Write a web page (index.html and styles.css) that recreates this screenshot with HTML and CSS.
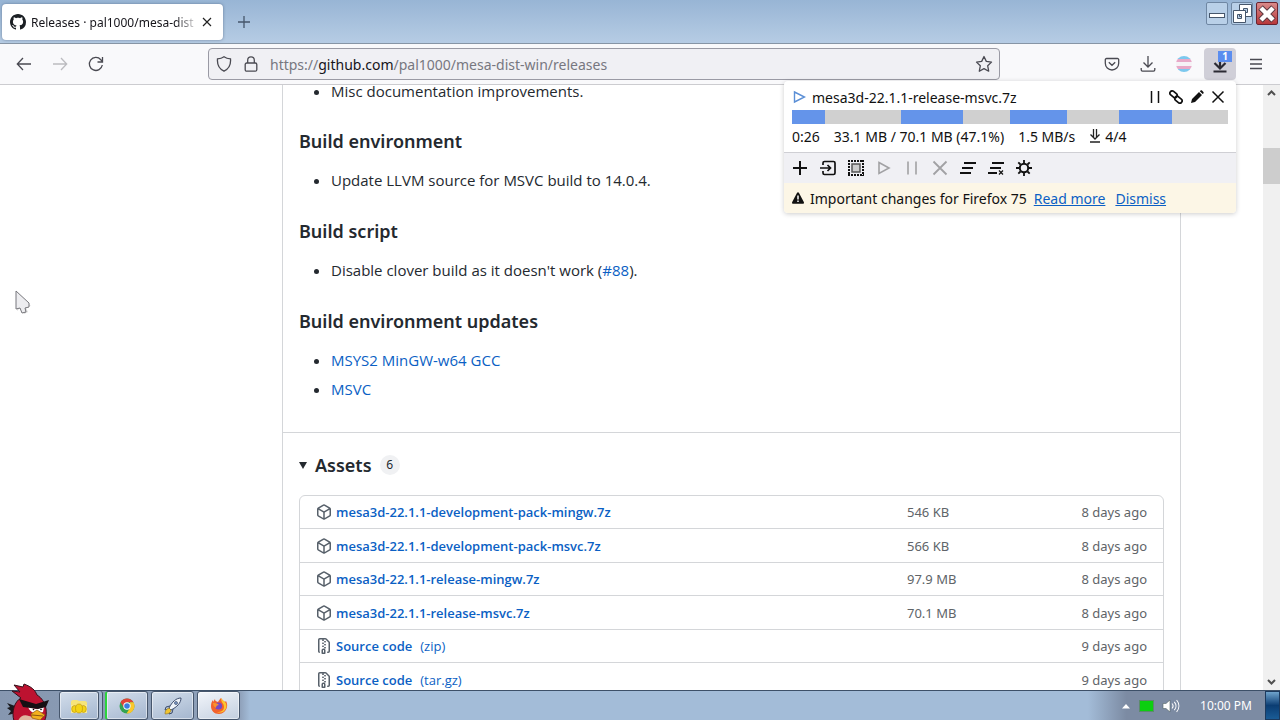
FILE: index.html
```html
<!DOCTYPE html>
<html lang="en">
  <head>
    <meta charset="UTF-8" />
    <meta name="viewport" content="width=device-width, initial-scale=1.0" />
    <title>Releases · pal1000/mesa-dist-win</title>
    <link rel="stylesheet" href="styles.css">
  </head>
  <body>
    <!-- Shared icons -->
    <svg class="icon-defs" aria-hidden="true">
      <symbol id="package" viewBox="0 0 16 16">
        <path fill-rule="evenodd" d="M8.878.392a1.75 1.75 0 00-1.756 0l-5.25 3.045A1.75 1.75 0 001 4.951v6.098c0 .624.332 1.2.872 1.514l5.25 3.045a1.75 1.75 0 001.756 0l5.25-3.045c.54-.313.872-.89.872-1.514V4.951c0-.624-.332-1.2-.872-1.514L8.878.392zM7.875 1.69a.25.25 0 01.25 0l4.63 2.685L8 7.133 3.245 4.375l4.63-2.685zM2.5 5.677v5.372c0 .09.047.171.125.216l4.625 2.683V8.432L2.5 5.677zm6.25 8.271l4.625-2.683a.25.25 0 00.125-.216V5.677L8.75 8.432v5.516z"/>
      </symbol>
      <symbol id="zip" viewBox="0 0 16 16">
        <path fill-rule="evenodd" d="M3.5 1.75a.25.25 0 01.25-.25h3a.75.75 0 000 1.5h.5a.75.75 0 000-1.5h2.086a.25.25 0 01.177.073l2.914 2.914a.25.25 0 01.073.177v8.586a.25.25 0 01-.25.25h-.5a.75.75 0 000 1.5h.5A1.75 1.75 0 0014 13.25V4.664c0-.464-.184-.909-.513-1.237L10.573.513A1.75 1.75 0 009.336 0H3.75A1.75 1.75 0 002 1.75v11.5c0 .649.353 1.214.874 1.515a.75.75 0 10.752-1.298.25.25 0 01-.126-.217V1.75zM8.75 3a.75.75 0 000 1.5h.5a.75.75 0 000-1.5h-.5zM6 5.25a.75.75 0 01.75-.75h.5a.75.75 0 010 1.5h-.5A.75.75 0 016 5.25zm2 1.5A.75.75 0 018.75 6h.5a.75.75 0 010 1.5h-.5A.75.75 0 018 6.75zm-1.25.75a.75.75 0 000 1.5h.5a.75.75 0 000-1.5h-.5zM8 9.75A.75.75 0 018.75 9h.5a.75.75 0 010 1.5h-.5A.75.75 0 018 9.75zm-.75.75a1.75 1.75 0 00-1.75 1.75v3c0 .414.336.75.75.75h2.5a.75.75 0 00.75-.75v-3a1.75 1.75 0 00-1.75-1.75h-.5zM7 12.25a.25.25 0 01.25-.25h.5a.25.25 0 01.25.25v2.25H7v-2.25z"/>
      </symbol>
    </svg>

    <!-- Tabs -->
    <header class="tab-bar">
      <div class="tab">
        <svg class="tab-icon" width="16" height="16" viewBox="0 0 16 16"><path fill="#1b1f24" d="M8 0C3.58 0 0 3.58 0 8c0 3.54 2.29 6.53 5.47 7.59.4.07.55-.17.55-.38 0-.19-.01-.82-.01-1.49-2.01.37-2.53-.49-2.69-.94-.09-.23-.48-.94-.82-1.13-.28-.15-.68-.52-.01-.53.63-.01 1.08.58 1.23.82.72 1.21 1.87.87 2.33.66.07-.52.28-.87.51-1.07-1.78-.2-3.64-.89-3.64-3.95 0-.87.31-1.59.82-2.15-.08-.2-.36-1.02.08-2.12 0 0 .67-.21 2.2.82.64-.18 1.32-.27 2-.27s1.36.09 2 .27c1.53-1.04 2.2-.82 2.2-.82.44 1.1.16 1.92.08 2.12.51.56.82 1.27.82 2.15 0 3.07-1.87 3.75-3.65 3.95.29.25.54.73.54 1.48 0 1.07-.01 1.93-.01 2.2 0 .21.15.46.55.38A8.01 8.01 0 0016 8c0-4.42-3.58-8-8-8z"/></svg>
        <span class="tab-title">Releases · pal1000/mesa-dist</span>
        <button class="tab-close" aria-label="Close tab"><svg width="10" height="10" viewBox="0 0 10 10"><path d="M1 1l8 8M9 1L1 9" stroke="#222" stroke-width="1.2"/></svg></button>
      </div>
      <button class="new-tab" aria-label="New tab"><svg width="12" height="12" viewBox="0 0 12 12"><path d="M6 0v12M0 6h12" stroke="#46566b" stroke-width="1.3"/></svg></button>
      <div class="window-controls">
        <button class="win-btn" aria-label="Minimize"><svg width="22" height="22" viewBox="0 0 22 22"><rect x="3.5" y="10.500" width="15" height="4" fill="#fff" stroke="#46566b"/></svg></button>
        <button class="win-btn" aria-label="Restore"><svg width="22" height="22" viewBox="0 0 22 22"><path fill="#fff" stroke="#46566b" fill-rule="evenodd" d="M8.500 1.500h12v12h-12zM12.500 5.500h4v4h-4z"/><path fill="#fff" stroke="#46566b" fill-rule="evenodd" d="M2.500 7.500h12v12h-12zM6.500 11.500h4v4h-4z"/></svg></button>
        <button class="win-btn win-close" aria-label="Close"><svg width="22" height="22" viewBox="0 0 22 22"><path d="M4.500 4.500l13 13M17.500 4.500l-13 13" stroke="#5b3a42" stroke-width="6.500"/><path d="M5 5l12 12M17 5L5 17" stroke="#fff" stroke-width="4.500"/></svg></button>
      </div>
    </header>

    <!-- Navigation -->
    <nav class="toolbar">
      <button class="tool" aria-label="Back"><svg width="16" height="16" viewBox="0 0 16 16"><path d="M15 8H1.500M7 2L1.300 8 7 14"/></svg></button>
      <button class="tool disabled" aria-label="Forward" disabled><svg width="16" height="16" viewBox="0 0 16 16"><path d="M1 8h13.500M9 2l5.700 6L9 14"/></svg></button>
      <button class="tool" aria-label="Reload"><svg width="16" height="16" viewBox="0 0 16 16"><path d="M14.300 9A6.500 6.500 0 1 1 12.800 3.700L14.500 5.500M14.500 1v5h-5"/></svg></button>

      <div class="url-bar">
        <svg class="line-icon" width="16" height="16" viewBox="0 0 16 16"><path d="M8 .8C6 2.300 3.800 2.800 1.500 2.900c-.5 5.700 1.500 10 6.500 12.300 5-2.300 7-6.600 6.500-12.300C12.200 2.800 10 2.300 8 .8z"/></svg>
        <svg class="line-icon" width="16" height="16" viewBox="0 0 16 16"><rect x="2.200" y="7" width="11.600" height="8.200" rx="1.500"/><path d="M4.700 7V4.200a3.300 3.300 0 0 1 6.600 0V7"/></svg>
        <a class="url" href="#">https://<b>github.com</b>/pal1000/mesa-dist-win/releases</a>
        <button class="star" aria-label="Bookmark this page"><svg class="line-icon" width="18" height="18" viewBox="0 0 18 18"><path stroke-linejoin="round" d="M9 1.500l2.300 4.900 5.200.7-3.800 3.700 1 5.400L9 13.600l-4.700 2.600 1-5.400L1.500 7.100l5.200-.7z"/></svg></button>
      </div>

      <button class="tool" aria-label="Save to Pocket"><svg width="16" height="16" viewBox="0 0 16 16"><path d="M2.500 2.500h11a1.200 1.200 0 0 1 1.200 1.200v3.600a6.700 6.700 0 0 1-13.400 0V3.700a1.200 1.200 0 0 1 1.200-1.200zM4.800 6.300L8 9.300l3.200-3"/></svg></button>
      <button class="tool" aria-label="Downloads"><svg width="16" height="16" viewBox="0 0 16 16"><path d="M8 0v10.500M3.500 6.500L8 11l4.500-4.500M1.200 12v1.800c0 .8.500 1.400 1.300 1.400h11c.8 0 1.300-.6 1.300-1.400V12"/></svg></button>
      <button class="tool" aria-label="Extension"><span class="flag"></span></button>
      <button class="tool active" aria-label="DownThemAll"><svg class="bold" width="16" height="18" viewBox="0 0 16 18"><path d="M8 0v13M2.500 8L8 13.500 13.500 8M1.500 16.500h13"/></svg><span class="badge">1</span></button>
      <button class="tool" aria-label="Menu"><svg width="16" height="16" viewBox="0 0 16 16"><path d="M2 3.500h12M2 8h12M2 12.500h12"/></svg></button>
    </nav>

    <!-- Page -->
    <div class="viewport">
      <main class="page">
        <article class="release">
          <div class="notes">
            <ul>
              <li>Misc documentation improvements.</li>
            </ul>
            <h3>Build environment</h3>
            <ul>
              <li>Update LLVM source for MSVC build to 14.0.4.</li>
            </ul>
            <h3>Build script</h3>
            <ul>
              <li>Disable clover build as it doesn't work (<a href="#">#88</a>).</li>
            </ul>
            <h3>Build environment updates</h3>
            <ul>
              <li><a href="#">MSYS2 MinGW-w64 GCC</a></li>
              <li><a href="#">MSVC</a></li>
            </ul>
          </div>

          <section class="assets">
            <h3 class="assets-title"><span class="caret"></span>Assets <span class="count">6</span></h3>
            <table>
              <tr>
                <td><a href="#"><svg><use href="#package"/></svg>mesa3d-22.1.1-development-pack-mingw.7z</a></td>
                <td class="size">546 KB</td>
                <td class="date">8 days ago</td>
              </tr>
              <tr>
                <td><a href="#"><svg><use href="#package"/></svg>mesa3d-22.1.1-development-pack-msvc.7z</a></td>
                <td class="size">566 KB</td>
                <td class="date">8 days ago</td>
              </tr>
              <tr>
                <td><a href="#"><svg><use href="#package"/></svg>mesa3d-22.1.1-release-mingw.7z</a></td>
                <td class="size">97.9 MB</td>
                <td class="date">8 days ago</td>
              </tr>
              <tr>
                <td><a href="#"><svg><use href="#package"/></svg>mesa3d-22.1.1-release-msvc.7z</a></td>
                <td class="size">70.1 MB</td>
                <td class="date">8 days ago</td>
              </tr>
              <tr>
                <td><a href="#"><svg><use href="#zip"/></svg>Source code <span>(zip)</span></a></td>
                <td class="size"></td>
                <td class="date">9 days ago</td>
              </tr>
              <tr>
                <td><a href="#"><svg><use href="#zip"/></svg>Source code <span>(tar.gz)</span></a></td>
                <td class="size"></td>
                <td class="date">9 days ago</td>
              </tr>
            </table>
          </section>
        </article>
      </main>
      <div class="scrollbar">
        <svg width="17" height="17" viewBox="0 0 17 17"><path d="M5 10l3.500-3.500L12 10"/></svg>
        <div class="thumb"></div>
        <svg width="17" height="17" viewBox="0 0 17 17"><path d="M5 7l3.500 3.500L12 7"/></svg>
      </div>
    </div>

    <!-- Download manager popup -->
    <aside class="downloads">
      <div class="download">
        <div class="download-head">
          <svg width="14" height="14" viewBox="0 0 14 14"><path d="M2.500 2l10 5-10 5z" fill="#fff" stroke="#5b8fd6" stroke-width="1.400"/></svg>
          <span class="filename">mesa3d-22.1.1-release-msvc.7z</span>
          <button aria-label="Pause"><svg width="14" height="14" viewBox="0 0 14 14"><path d="M3.500 1v12M10.500 1v12" stroke="#111" stroke-width="1.500"/></svg></button>
          <button aria-label="Copy link"><svg width="14" height="14" viewBox="0 0 14 14" fill="none" stroke="#111" stroke-width="1.700"><rect x="0.500" y="2" width="8" height="4.500" rx="2.200" transform="rotate(40 4.500 4.300)"/><rect x="5.500" y="7.500" width="8" height="4.500" rx="2.200" transform="rotate(40 9.500 9.700)"/></svg></button>
          <button aria-label="Rename"><svg width="14" height="14" viewBox="0 0 14 14"><path d="M1 13l1-4 7-7 3 3-7 7zM9.800 1.300l.8-.7c.5-.4 1-.4 1.400 0l1.400 1.400c.4.500.4 1 0 1.400l-.7.700z" fill="#111"/></svg></button>
          <button aria-label="Cancel"><svg width="14" height="14" viewBox="0 0 14 14"><path d="M1.500 1.500l11 11M12.500 1.500l-11 11" stroke="#111" stroke-width="1.500"/></svg></button>
        </div>
        <div class="segments">
          <div><span style="width: 30%"></span></div>
          <div><span style="width: 57%"></span></div>
          <div><span style="width: 52%"></span></div>
          <div><span style="width: 49%"></span></div>
        </div>
        <div class="stats">
          <span>0:26</span>
          <span>33.1 MB / 70.1 MB (47.1%)</span>
          <span>1.5 MB/s</span>
          <span class="threads"><svg width="12" height="14" viewBox="0 0 12 14"><path d="M4.500 0v9M7.500 0v9M1.500 5.500L6 10l4.500-4.500M1 13h10" fill="none" stroke="#222" stroke-width="1.300"/></svg>4/4</span>
        </div>
      </div>
      <div class="actions">
        <button aria-label="Add"><svg width="16" height="16" viewBox="0 0 16 16"><path d="M8 1v14M1 8h14" stroke-width="2"/></svg></button>
        <button aria-label="Import"><svg width="16" height="16" viewBox="0 0 16 16"><path d="M3 5V3c0-1 .5-1.500 1.500-1.500h9c1 0 1.500.5 1.500 1.500v10c0 1-.5 1.500-1.500 1.500h-9c-1 0-1.500-.5-1.500-1.500v-2M0 8h10M7.500 5l3 3-3 3" stroke-width="1.700"/></svg></button>
        <button aria-label="Select all"><svg width="16" height="16" viewBox="0 0 16 16"><path d="M0 1h16M0 15h16M1 0v16M15 0v16" stroke-width="2" stroke-dasharray="2 1"/><rect x="4" y="4" width="8" height="8" fill="#ccc" stroke="#555" stroke-width="1.500"/></svg></button>
        <button aria-label="Start" class="off" disabled><svg width="16" height="16" viewBox="0 0 16 16"><path d="M3 2.500L13 8 3 13.500z" stroke-width="1.600"/></svg></button>
        <button aria-label="Pause all" class="off" disabled><svg width="16" height="16" viewBox="0 0 16 16"><path d="M4 1.500v13M12 1.500v13" stroke-width="1.600"/></svg></button>
        <button aria-label="Cancel all" class="off" disabled><svg width="16" height="16" viewBox="0 0 16 16"><path d="M1.500 1.500l13 13M14.500 1.500l-13 13" stroke-width="1.800"/></svg></button>
        <button aria-label="Remove finished"><svg width="16" height="16" viewBox="0 0 16 16"><path d="M4 3h12M2 8h11M0 13h11" stroke-width="2"/></svg></button>
        <button aria-label="Remove failed"><svg width="16" height="16" viewBox="0 0 16 16"><path d="M4 3h12M2 8h11M0 13h9" stroke-width="2"/><path d="M11 10.500l4 4M15 10.500l-4 4" stroke-width="1.200"/></svg></button>
        <button aria-label="Settings"><svg width="16" height="16" viewBox="0 0 16 16"><circle cx="8" cy="8" r="4.200" stroke-width="2"/><path d="M8 0v3M8 13v3M0 8h3M13 8h3M2.300 2.300l2.200 2.200M11.500 11.500l2.200 2.200M13.700 2.300l-2.200 2.200M4.500 11.500l-2.200 2.200" stroke-width="1.800"/></svg></button>
      </div>
      <div class="notice">
        <svg width="12" height="12" viewBox="0 0 12 12"><path d="M6 .3c.4 0 .7.200.9.500l4.900 9.300c.4.800 0 1.600-.9 1.600H1.100c-.9 0-1.300-.8-.9-1.600L5.100.8c.2-.3.500-.5.900-.5z" fill="#111"/><path d="M6 3.500v4M6 8.500v1.500" stroke="#fff" stroke-width="1.500"/></svg>
        <span>Important changes for Firefox 75</span>
        <a href="#">Read more</a>
        <a href="#">Dismiss</a>
      </div>
    </aside>

    <!-- Taskbar -->
    <footer class="taskbar">
      <button class="start" aria-label="Start">
        <svg class="bird" width="46" height="40" viewBox="0 0 46 40">
          <path d="M9 23L1 20l3 4-3 1 4 3-3 4 8-2z" fill="#1a1a1f"/>
          <path d="M8 38C5 28 9 18 15 15L6 8l8 1-6-7 9 2 1-3c8 3 11 6 13 11 5 3 8 8 9 14 1 8-1 12-4 15H10z" fill="#bd1230" stroke="#35101a" stroke-width="1"/>
          <path d="M12 38c2-5 6-7 11-5l12 3c-1 4-4 5-6 5H12z" fill="#dfb79f"/>
          <path d="M22 24l8 2 8-2-1 5c-2 1-4 1-6 0-3 2-7 0-9-5z" fill="#fff"/>
          <path d="M13 16l17 5 13-4-3 7-8 2-15-2z" fill="#151013"/>
          <path d="M25 31l6-4 8 5-5 5-8-2z" fill="#f3b01e" stroke="#8c5710" stroke-width=".7"/>
          <path d="M26 32l11 1" stroke="#8c5710"/>
          <circle cx="27.500" cy="26.500" r=".8"/><circle cx="35" cy="26.500" r=".8"/>
        </svg>
      </button>
      <button class="task grouped" aria-label="File manager"><svg width="18" height="16" viewBox="0 0 18 16"><path d="M1 4c0-1 1-2 2-2h4l2 1h6c1 0 2 1 2 2v10H1z" fill="#f6e47a"/><path d="M1 7h16v8H1z" fill="#f8ec9c"/><g fill="#f4d416" stroke="#b38b10" stroke-width=".6"><ellipse cx="4.500" cy="11" rx="2.800" ry="3.500"/><ellipse cx="13.500" cy="11" rx="2.800" ry="3.500"/><ellipse cx="9" cy="10.500" rx="3.500" ry="4.500"/></g></svg></button>
      <button class="task chrome" aria-label="Chrome"><svg width="16" height="16" viewBox="0 0 16 16"><circle cx="8" cy="8" r="7.500" fill="#34a352"/><path d="M1.500 4.200A7.500 7.500 0 0 1 14.500 4.300H8L5 9.700z" fill="#e04438"/><path d="M14.500 4.300A7.500 7.500 0 0 1 7.500 15.500L11.300 9.500 11 4.300z" fill="#fbc72c"/><circle cx="8" cy="8" r="3.700" fill="#fff"/><circle cx="8" cy="8" r="2.800" fill="#3a7de0"/></svg></button>
      <button class="task" aria-label="Launcher"><svg width="18" height="18" viewBox="0 0 18 18"><path d="M6 9l-4 1-1 3 4-1M9 12l-1 4-3 1 1-4" fill="#b7c7dd" stroke="#3c4c6c"/><path d="M17 1c-5 0-9 4-12 10l2 2c6-3 10-7 10-12z" fill="#eef3f9" stroke="#3c4c6c"/><circle cx="12" cy="6" r="1.500" fill="#7e9cc8" stroke="#3c4c6c" stroke-width=".7"/><path d="M5 11l2 2c0 3-3 4-6 4 0-3 1-5 4-6z" fill="#f1c431" stroke="#8a7328" stroke-width=".6"/></svg></button>
      <button class="task current" aria-label="Firefox"><svg width="18" height="18" viewBox="0 0 18 18"><path d="M9 17C4 17 1 13.500 1 9c0-3 1-5 2-6v2l2-3c0 2 1 2 3 3 1-2 2-3 3-4 1 2 3 3 4 4l1-1c1 2 1.500 4 1 6-1 4-4 7-8 7z" fill="#f2622c"/><path d="M11 1c1 2 3 3 4 4 2 2 2 6 0 8-2 3-6 3-8 2 5 0 7-2 7-5 0-4-3-4-3-9z" fill="#fdc62e"/><circle cx="8.500" cy="9" r="3.600" fill="#7547c6"/><path d="M3 6c2 0 4 0 6 2-2 0-3 1-3 3-2-1-3-3-3-5z" fill="#f8912c"/></svg></button>
      <div class="tray">
        <svg width="10" height="6" viewBox="0 0 10 6"><path d="M1 5.500L5 1l4 4.500z" fill="#fff"/></svg>
        <span class="tray-green"></span>
        <svg width="18" height="14" viewBox="0 0 18 14"><path d="M1 4.500h3L8 1v12L4 9.500H1z" fill="#fff" stroke="#566" stroke-width=".6"/><path d="M10 4.500c1.300 1.500 1.300 3.500 0 5M12.300 2.800c2.200 2.500 2.200 6 0 8.400M14.600 1c3 3.600 3 8.400 0 12" fill="none" stroke="#fff" stroke-width="1.100"/></svg>
        <time class="clock">10:00 PM</time>
      </div>
      <button class="show-desktop" aria-label="Show desktop"></button>
    </footer>

    <svg class="cursor" width="18" height="26" viewBox="0 0 18 26"><path d="M2 3v18l4-4 3 7 4-2-3-6h6z" fill="#999" opacity=".35"/><path d="M1 1l13 12v4l-4 1 1 4-4 1-2-5-4 1z" fill="#ededf0" stroke="#77777c" stroke-width="1"/></svg>
  </body>
</html>
```
FILE: styles.css
```css
* {
  margin: 0;
  padding: 0;
  box-sizing: border-box;
}

body {
  font-family: "Open Sans", "Noto Sans", sans-serif;
  font-size: 15px;
  color: #24292f;
  background: #fff;
  display: flex;
  flex-direction: column;
  height: 100vh;
  overflow: hidden;
}

button {
  border: none;
  background: none;
  font: inherit;
  display: flex;
  align-items: center;
  justify-content: center;
  flex: none;
}

svg {
  flex: none;
}

a {
  color: #0b5fc4;
  text-decoration: none;
}

.icon-defs {
  display: none;
}

/* Tab bar */
.tab-bar {
  display: flex;
  align-items: flex-start;
  height: 44px;
  padding: 4px 2px 0;
  background: linear-gradient(#98b5d5, #b6cce4);
  border-bottom: 1px solid #8795a5;
  flex: none;
}

.tab {
  display: flex;
  align-items: center;
  width: 221px;
  height: 36px;
  padding: 0 8px;
  background: #fff;
  border-radius: 4px;
  box-shadow: 0 0 3px rgba(40, 60, 90, 0.5);
}

.tab-title {
  flex: 1;
  margin-left: 5px;
  font-family: "Noto Sans", sans-serif;
  font-size: 12px;
  color: #15141a;
  white-space: nowrap;
  mask-image: linear-gradient(to left, transparent, #000 24px);
}

.tab-close {
  width: 16px;
  height: 16px;
}

.new-tab {
  width: 42px;
  height: 36px;
}

.window-controls {
  display: flex;
  gap: 3px;
  margin-left: auto;
  margin-top: -2px;
}

.win-btn {
  width: 22px;
  height: 23px;
  background: #b9d0e8;
  border: 1px solid #6f87a3;
  border-radius: 2px;
}

.win-close {
  background: linear-gradient(#d98a8a, #b8383a);
  border-color: #6a2430;
}

/* Toolbar */
.toolbar {
  display: flex;
  align-items: center;
  height: 41px;
  padding: 0 6px;
  background: #f9f9fb;
  border-bottom: 1px solid #ccccd0;
  flex: none;
}

.tool {
  position: relative;
  width: 32px;
  height: 32px;
  margin: 0 2px;
  border-radius: 4px;
}

.tool svg,
.line-icon {
  fill: none;
  stroke: #4a4a52;
  stroke-width: 1.3;
}

.tool .bold {
  stroke: #2b2a33;
  stroke-width: 2.2;
}

.disabled {
  opacity: 0.35;
}

.active {
  background: #d0cfd8;
}

.badge {
  position: absolute;
  top: 3px;
  right: 4px;
  width: 14px;
  background: #5b8def;
  color: #fff;
  font-size: 10px;
  font-weight: 700;
  line-height: 11px;
}

.flag {
  width: 16px;
  height: 16px;
  border-radius: 50%;
  background: linear-gradient(#7cc8ee 20%, #e8a9c8 20% 40%, #f6f2f6 40% 60%, #e8a9c8 60% 80%, #7cc8ee 80%);
}

.url-bar {
  flex: 1;
  display: flex;
  align-items: center;
  gap: 11px;
  height: 32px;
  margin: 0 94px;
  padding: 0 6px 0 7px;
  background: #f0f0f4;
  border: 1px solid #9a9aa4;
  border-radius: 4px;
}

.url {
  flex: 1;
  font-family: "Noto Sans", sans-serif;
  font-size: 14px;
  color: #777780;
}

.url b {
  color: #15141a;
  font-weight: 400;
}

/* Page */
.viewport {
  flex: 1;
  display: flex;
  min-height: 0;
}

.page {
  flex: 1;
  display: grid;
  grid-template-columns: 282px 1fr 82px;
  overflow: hidden;
}

.release {
  grid-column: 2;
  border: solid #d4d6d9;
  border-width: 0 1px;
}

/* first list is partly scrolled out of view */
.notes {
  margin-top: -6px;
  padding: 0 16px 31px;
}

.notes ul {
  padding-left: 32px;
}

.notes li {
  line-height: 24px;
}

.notes li + li {
  margin-top: 5px;
}

h3 {
  font-family: "Noto Sans", sans-serif;
  font-size: 18px;
  font-weight: 600;
  line-height: 26px;
}

.notes h3 {
  margin: 25px 0 14px;
}

.notes h3 + ul:not(:last-child) {
  padding-bottom: 1px;
}

.assets {
  padding: 19px 16px;
  border-top: 1px solid #d4d6d9;
}

.assets-title {
  display: flex;
  align-items: center;
  margin-bottom: 17px;
}

.caret {
  width: 8px;
  border: solid transparent;
  border-width: 7px 4px 0;
  border-top-color: #24292f;
  margin-right: 8px;
}

.count {
  min-width: 20px;
  margin-left: 8px;
  background: #f0f1f3;
  border-radius: 10px;
  font-size: 12px;
  font-weight: 400;
  line-height: 20px;
  text-align: center;
}

table {
  width: 100%;
  border: 1px solid #d4d6d9;
  border-radius: 6px;
  border-spacing: 0;
  font-size: 13px;
}

td {
  height: 33px;
  padding: 0 16px;
  border-bottom: 1px solid #d4d6d9;
}

tr:nth-child(even) td {
  height: 34px;
}

td a {
  display: flex;
  align-items: center;
  font-weight: 600;
}

td a span {
  font-weight: 400;
  margin-left: 8px;
}

td svg {
  width: 16px;
  height: 16px;
  margin-right: 4px;
  fill: #57606a;
}

.size,
.date {
  font-family: "Noto Sans", sans-serif;
  color: #606468;
}

.size {
  width: 150px;
  padding-left: 0;
}

.date {
  width: 106px;
  text-align: right;
  white-space: nowrap;
}

.scrollbar {
  display: flex;
  flex-direction: column;
  width: 17px;
  background: #f0f0f0;
}

.scrollbar svg {
  fill: none;
  stroke: #505050;
  stroke-width: 2;
}

.thumb {
  height: 36px;
  margin: 46px 0 auto;
  background: #cdcdcd;
}

/* Download manager popup */
.downloads {
  position: absolute;
  top: 81px;
  right: 44px;
  width: 452px;
  background: #fff;
  border-radius: 4px;
  box-shadow: 0 1px 5px rgba(0, 0, 0, 0.2);
  color: #111;
  font-family: "Noto Sans", sans-serif;
  font-size: 14px;
  overflow: hidden;
}

.download {
  padding: 4px 8px;
  border-bottom: 1px solid #cfcfd4;
}

.download-head {
  display: flex;
  align-items: center;
  height: 24px;
  margin-bottom: 1px;
  padding-right: 3px;
}

.download-head button {
  margin-left: 7px;
}

.filename {
  flex: 1;
  margin-left: 6px;
}

.segments {
  display: grid;
  grid-template-columns: repeat(4, 1fr);
  height: 14px;
  background: #d0d0d0;
}

.segments span {
  display: block;
  height: 14px;
  background: #6494ea;
}

.stats {
  display: flex;
  gap: 14px;
  height: 24px;
  align-items: center;
}

.threads {
  display: flex;
  align-items: center;
  gap: 4px;
}

.actions {
  display: flex;
  gap: 12px;
  padding: 7px 8px;
  background: #f0f0f4;
}

.actions svg {
  fill: none;
  stroke: #111;
}

.actions .off {
  opacity: 0.35;
}

.notice {
  display: flex;
  align-items: center;
  height: 30px;
  padding: 0 8px;
  background: #fcf6e6;
}

.notice span {
  margin: 0 7px 0 6px;
}

.notice a {
  margin-right: 10px;
  text-decoration: underline;
}

/* Taskbar */
.taskbar {
  display: flex;
  height: 30px;
  background: linear-gradient(to right, #8697b0 0, #8fa1ba 240px, #a3bcd8 250px, #a3bcd8 85%, #7c8ba3 88%);
  border-top: 1px solid #3d5068;
  flex: none;
}

.start {
  position: relative;
  width: 59px;
}

.bird {
  position: absolute;
  left: 6px;
  bottom: -3px;
}

.task {
  width: 43px;
  height: 29px;
  margin-right: 3px;
  background: linear-gradient(160deg, #d3deeb, #a4b6cf);
  border: 1px solid #46566c;
  border-radius: 3px;
  box-shadow: inset 0 0 0 1px rgba(255, 255, 255, 0.5);
}

.grouped {
  width: 40px;
  margin-right: 6px;
  box-shadow: inset 0 0 0 1px rgba(255, 255, 255, 0.5), 3px 0 0 #a4b6cf, 4px 0 0 #46566c;
}

.chrome {
  border-left: 2px solid #2bd43c;
}

.current {
  background: linear-gradient(160deg, #f2f5fa, #c3cfdf);
}

.tray {
  display: flex;
  align-items: center;
  gap: 9px;
  margin-left: auto;
  color: #fff;
  font-size: 12px;
}

.tray-green {
  width: 13px;
  height: 10px;
  background: #0ccf10;
  outline: 1px solid #5c8a6c;
}

.clock {
  margin: 0 13px 0 11px;
  font-family: "Noto Sans", sans-serif;
}

.show-desktop {
  width: 15px;
  background: linear-gradient(#6fa3cc, #0b3d73 50%, #1a5c96);
  border: 1px solid #1c3a5e;
}

/* Mouse pointer */
.cursor {
  position: absolute;
  left: 15px;
  top: 290px;
}
```
